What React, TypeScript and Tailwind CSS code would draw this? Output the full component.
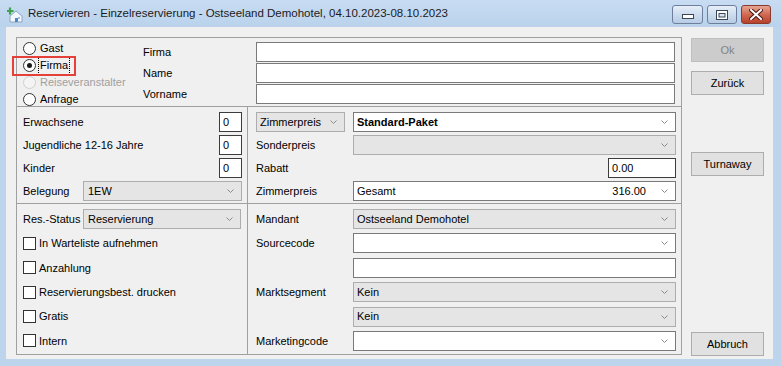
import type { ReactNode } from "react";

const chevron = (
  <svg width="7" height="4" viewBox="0 0 7 4" className="shrink-0">
    <polyline points="0.5,0.5 3.5,3.5 6.5,0.5" fill="none" stroke="#8a8a8a" strokeWidth="1" />
  </svg>
);

function Combo({
  value,
  right,
  gray = false,
  bold = false,
  className = "",
}: {
  value?: string;
  right?: string;
  gray?: boolean;
  bold?: boolean;
  className?: string;
}) {
  return (
    <div
      className={`flex h-[20px] items-center border pl-[3px] pr-[7px] ${
        gray ? "border-[#adadad] bg-[#e5e5e5]" : "border-[#7a7a7a] bg-white"
      } ${className}`}
    >
      <span className={`flex-1 truncate ${bold ? "font-bold" : ""}`}>{value}</span>
      {right && <span className="mr-[15px]">{right}</span>}
      {chevron}
    </div>
  );
}

function TextBox({ value, className = "" }: { value?: string; className?: string }) {
  return (
    <div className={`flex h-[20px] items-center border border-[#7a7a7a] bg-white pl-[3px] ${className}`}>
      {value}
    </div>
  );
}

function NumBox({ value, className = "" }: { value: string; className?: string }) {
  return (
    <div className={`flex h-[20px] items-center border border-[#3c3c3c] bg-white pl-[3px] ${className}`}>
      {value}
    </div>
  );
}

function Radio({ label, checked = false, disabled = false, focus = false }: { label: string; checked?: boolean; disabled?: boolean; focus?: boolean }) {
  return (
    <div className="flex h-[17px] items-center">
      <span
        className={`flex h-[13px] w-[13px] items-center justify-center rounded-full border ${
          disabled ? "border-[#d0d0d0] bg-[#f4f4f4]" : "border-[#333333] bg-white"
        }`}
      >
        {checked && <span className="h-[5px] w-[5px] rounded-full bg-[#1a1a1a]" />}
      </span>
      <span
        className={`ml-[2px] px-[1px] ${disabled ? "text-[#a0a0a0]" : ""} ${
          focus ? "border border-dotted border-black" : "border border-transparent"
        }`}
      >
        {label}
      </span>
    </div>
  );
}

function Check({ label }: { label: string }) {
  return (
    <div className="flex h-[20px] items-center">
      <span className="h-[13px] w-[13px] border border-[#333333] bg-white" />
      <span className="ml-[3px]">{label}</span>
    </div>
  );
}

function Row({ label, width, children }: { label: string; width: string; children?: ReactNode }) {
  return (
    <div className="flex h-[20px] items-center">
      <span className={`shrink-0 ${width}`}>{label}</span>
      {children}
    </div>
  );
}

function WinButton({ children, disabled = false, className = "" }: { children: ReactNode; disabled?: boolean; className?: string }) {
  return (
    <div
      className={`flex h-[24px] w-[73px] items-center justify-center border ${
        disabled ? "border-[#bfbfbf] bg-[#cccccc] text-[#838383]" : "border-[#adadad] bg-[#e1e1e1]"
      } ${className}`}
    >
      {children}
    </div>
  );
}

function TitleBar() {
  return (
    <div className="flex h-[27px] shrink-0 items-center bg-linear-to-b from-[#c8dcf2] to-[#bad2ec]">
      <svg width="16" height="16" viewBox="0 0 16 16" className="ml-[7px] mt-[2px]">
        <path d="M3 9 L9 4 L15 9 L15 15 L3 15 Z" fill="#f4f8fc" stroke="#8aa6c4" strokeWidth="1" />
        <rect x="8" y="11" width="3" height="4" fill="#4f86c6" />
        <rect x="11" y="10" width="2" height="2" fill="#9cc0e6" />
        <path d="M3 0.5 V7.5 M-0.5 4 H6.5" stroke="#3fa34d" strokeWidth="2.2" />
      </svg>
      <span className="ml-[5px] text-[11.5px] text-[#1b1b1b]">
        Reservieren - Einzelreservierung - Ostseeland Demohotel, 04.10.2023-08.10.2023
      </span>
      <div className="ml-auto mr-[10px] flex gap-[4px] self-start pt-[5px]">
        <div className="flex h-[19px] w-[31px] items-center justify-center rounded-[3px] border border-[#6d7f9c] bg-linear-to-b from-[#e7eef8] via-[#cddcee] to-[#b8cce4]">
          <svg width="12" height="5" viewBox="0 0 12 5" className="mt-[4px]">
            <rect x="0.5" y="0.5" width="11" height="4" fill="#ffffff" stroke="#39465a" />
          </svg>
        </div>
        <div className="flex h-[19px] w-[30px] items-center justify-center rounded-[3px] border border-[#6d7f9c] bg-linear-to-b from-[#e7eef8] via-[#cddcee] to-[#b8cce4]">
          <svg width="12" height="10" viewBox="0 0 12 10">
            <rect x="0.5" y="0.5" width="11" height="9" fill="#ffffff" stroke="#39465a" />
            <rect x="3" y="3.5" width="6" height="3.5" fill="#d7e3f1" stroke="#39465a" />
          </svg>
        </div>
        <div className="flex h-[19px] w-[30px] items-center justify-center rounded-[3px] border border-[#8a3a2c] bg-linear-to-b from-[#e7a593] via-[#d06a52] to-[#b8402b]">
          <svg width="14" height="11" viewBox="0 0 14 11">
            <path d="M2 1 L12 10 M12 1 L2 10" stroke="#4a1a14" strokeWidth="4" strokeLinecap="square" />
            <path d="M2 1 L12 10 M12 1 L2 10" stroke="#ffffff" strokeWidth="2" strokeLinecap="square" />
          </svg>
        </div>
      </div>
    </div>
  );
}

export default function App() {
  return (
    <div className="relative flex h-[366px] w-[781px] flex-col overflow-hidden bg-[#bcd4ec] font-['Liberation_Sans',Arial,sans-serif] text-[11px] text-black">
      <TitleBar />
      <div className="mb-[7px] ml-[6px] mr-[8px] flex flex-1 bg-[#f0f0f0] pl-[10px] pt-[10px]">
        {/* group box */}
        <div className="flex h-[318px] w-[666px] flex-col border border-[#a0a0a0]">
          {/* guest / company */}
          <div className="flex h-[69px] border-b border-[#a0a0a0]">
            <div className="w-[126px] pl-[6px] pt-[2px]">
              <Radio label="Gast" />
              <Radio label="Firma" checked focus />
              <Radio label="Reiseveranstalter" disabled />
              <Radio label="Anfrage" />
            </div>
            <div className="flex w-[113px] flex-col gap-[1px] pt-[4px]">
              {["Firma", "Name", "Vorname"].map((l) => (
                <div key={l} className="flex h-[20px] items-center">
                  {l}
                </div>
              ))}
            </div>
            <div className="flex w-[419px] flex-col gap-[1px] pt-[4px]">
              <TextBox />
              <TextBox />
              <TextBox />
            </div>
          </div>

          {/* persons / price */}
          <div className="flex h-[97px] border-b border-[#a0a0a0]">
            <div className="flex w-[231px] flex-col gap-[3px] border-r border-[#a0a0a0] pl-[6px] pr-[5px] pt-[5px]">
              <Row label="Erwachsene" width="flex-1">
                <NumBox value="0" className="w-[23px]" />
              </Row>
              <Row label="Jugendliche 12-16 Jahre" width="flex-1">
                <NumBox value="0" className="w-[23px]" />
              </Row>
              <Row label="Kinder" width="flex-1">
                <NumBox value="0" className="w-[23px]" />
              </Row>
              <Row label="Belegung" width="w-[60px]">
                <Combo value="1EW" gray className="h-[19px] flex-1 pl-[4px]" />
              </Row>
            </div>
            <div className="flex flex-1 flex-col gap-[3px] pl-[8px] pr-[5px] pt-[5px]">
              <div className="flex h-[20px] items-center gap-[8px]">
                <Combo value="Zimmerpreis" gray className="w-[89px]" />
                <Combo value="Standard-Paket" bold className="flex-1" />
              </div>
              <Row label="Sonderpreis" width="w-[97px]">
                <Combo gray className="flex-1" />
              </Row>
              <Row label="Rabatt" width="flex-1">
                <NumBox value="0.00" className="w-[68px]" />
              </Row>
              <Row label="Zimmerpreis" width="w-[97px]">
                <Combo value="Gesamt" right="316.00" className="flex-1" />
              </Row>
            </div>
          </div>

          {/* status / codes */}
          <div className="flex flex-1">
            <div className="flex w-[231px] flex-col gap-[4.4px] border-r border-[#a0a0a0] pl-[6px] pr-[6px] pt-[5px]">
              <Row label="Res.-Status" width="w-[60px]">
                <Combo value="Reservierung" gray className="flex-1 pl-[4px]" />
              </Row>
              <Check label="In Warteliste aufnehmen" />
              <Check label="Anzahlung" />
              <Check label="Reservierungsbest. drucken" />
              <Check label="Gratis" />
              <Check label="Intern" />
            </div>
            <div className="flex flex-1 flex-col gap-[4.4px] pl-[8px] pr-[5px] pt-[5px]">
              <Row label="Mandant" width="w-[97px]">
                <Combo value="Ostseeland Demohotel" gray className="flex-1" />
              </Row>
              <Row label="Sourcecode" width="w-[97px]">
                <Combo className="flex-1" />
              </Row>
              <Row label="" width="w-[97px]">
                <TextBox className="flex-1" />
              </Row>
              <Row label="Marktsegment" width="w-[97px]">
                <Combo value="Kein" gray className="flex-1" />
              </Row>
              <Row label="" width="w-[97px]">
                <Combo value="Kein" gray className="flex-1" />
              </Row>
              <Row label="Marketingcode" width="w-[97px]">
                <Combo className="flex-1" />
              </Row>
            </div>
          </div>
        </div>

        {/* buttons */}
        <div className="ml-[9px] flex flex-col">
          <WinButton disabled className="mt-[1px]">
            Ok
          </WinButton>
          <WinButton className="mt-[9px]">Zurück</WinButton>
          <WinButton className="mt-[57px]">Turnaway</WinButton>
          <WinButton className="mt-[156px]">Abbruch</WinButton>
        </div>
      </div>

      {/* highlight marker */}
      <div className="absolute left-[12px] top-[56px] h-[20px] w-[64px] border-2 border-[#e5403a]" />
    </div>
  );
}
